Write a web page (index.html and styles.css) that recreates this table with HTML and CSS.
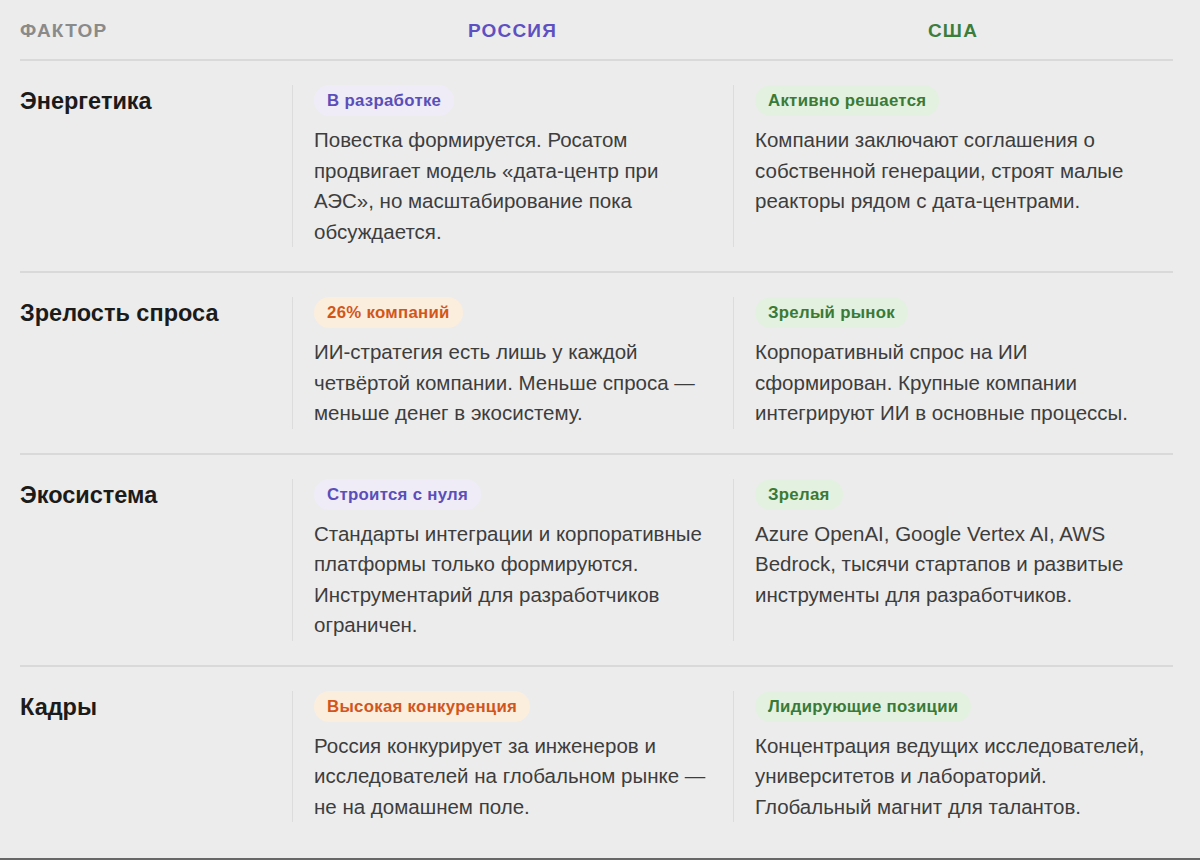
FILE: index.html
```html
<!DOCTYPE html>
<html lang="ru">
<head>
<meta charset="utf-8">
<title>Сравнение</title>
<link rel="stylesheet" href="styles.css">
</head>
<body>
<div class="table">
  <div class="row head">
    <div class="h-factor">Фактор</div>
    <div class="h-ru">Россия</div>
    <div class="h-us">США</div>
  </div>

  <div class="row">
    <div class="factor">Энергетика</div>
    <div class="cell ru">
      <span class="badge purple">В разработке</span>
      <p>Повестка формируется. Росатом продвигает модель «дата-центр при АЭС», но масштабирование пока обсуждается.</p>
    </div>
    <div class="cell us">
      <span class="badge green">Активно решается</span>
      <p>Компании заключают соглашения о собственной генерации, строят малые реакторы рядом с дата-центрами.</p>
    </div>
  </div>

  <div class="row">
    <div class="factor">Зрелость спроса</div>
    <div class="cell ru">
      <span class="badge orange">26% компаний</span>
      <p>ИИ-стратегия есть лишь у каждой четвёртой компании. Меньше спроса — меньше денег в экосистему.</p>
    </div>
    <div class="cell us">
      <span class="badge green">Зрелый рынок</span>
      <p>Корпоративный спрос на ИИ сформирован. Крупные компании интегрируют ИИ в основные процессы.</p>
    </div>
  </div>

  <div class="row">
    <div class="factor">Экосистема</div>
    <div class="cell ru">
      <span class="badge purple">Строится с нуля</span>
      <p>Стандарты интеграции и корпоративные платформы только формируются. Инструментарий для разработчиков ограничен.</p>
    </div>
    <div class="cell us">
      <span class="badge green">Зрелая</span>
      <p>Azure OpenAI, Google Vertex AI, AWS Bedrock, тысячи стартапов и развитые инструменты для разработчиков.</p>
    </div>
  </div>

  <div class="row last">
    <div class="factor">Кадры</div>
    <div class="cell ru">
      <span class="badge orange">Высокая конкуренция</span>
      <p>Россия конкурирует за инженеров и исследователей на глобальном рынке&nbsp;— не на домашнем поле.</p>
    </div>
    <div class="cell us">
      <span class="badge green">Лидирующие позиции</span>
      <p>Концентрация ведущих исследователей, университетов и лабораторий. Глобальный магнит для талантов.</p>
    </div>
  </div>
</div>
</body>
</html>
```

FILE: styles.css
```css
* { box-sizing: border-box; }

html { background: #ececec; }

body {
  margin: 0;
  padding: 0 27px 0 20px;
  min-height: 860px;
  background: #ececec;
  border-bottom: 2px solid #676767;
  font-family: "Liberation Sans", Arial, Helvetica, sans-serif;
  color: #3b3b3b;
}

.table {
  width: 1153px;
}

.row {
  display: grid;
  grid-template-columns: 272px 441px 440px;
  padding: 24px 0;
  border-bottom: 2px solid #d9d9d9;
}

.row.last { border-bottom: none; }

.row.head {
  padding: 3px 0 0;
  height: 61px;
  align-items: center;
  font-size: 19px;
  font-weight: 700;
  text-transform: uppercase;
  letter-spacing: 1.2px;
}

.h-factor { color: #8a8a8a; }
.h-ru { color: #5e50c2; text-align: center; }
.h-us { color: #3b7d3b; text-align: center; }

.factor {
  font-size: 23.5px;
  font-weight: 700;
  line-height: 32px;
  color: #1b1b1b;
}

.cell {
  border-left: 1px solid #dcdcdc;
  padding-left: 21px;
  padding-right: 28px;
}

.cell.ru { padding-right: 21px; }

.cell p {
  margin: 9px 0 0;
  font-size: 20.5px;
  line-height: 30.5px;
  color: #3d3d3d;
}

.badge {
  display: inline-block;
  height: 31px;
  line-height: 31px;
  padding: 0 13px;
  border-radius: 16px;
  font-size: 16.8px;
  font-weight: 700;
  letter-spacing: 0.3px;
}

.badge.purple { background: #efecf8; color: #5a4fb8; }
.badge.green { background: #e3f1e1; color: #3a7a36; }
.badge.orange { background: #fbeedd; color: #d2561c; }
```
